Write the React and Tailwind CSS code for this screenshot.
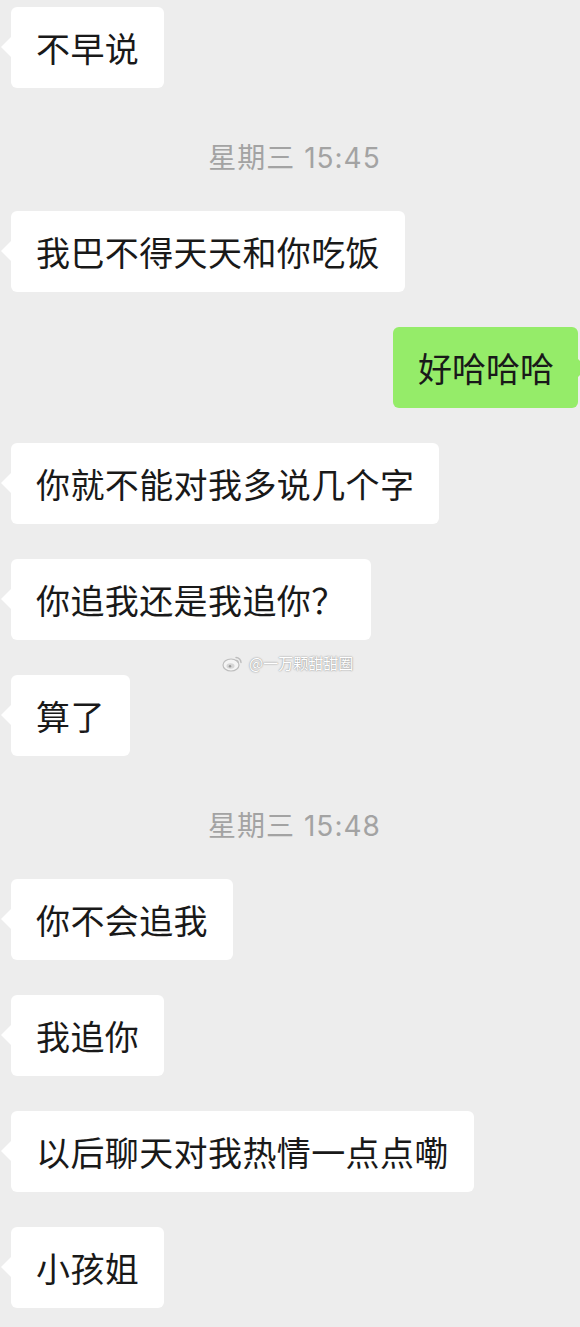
import React from 'react';

const font = { fontFamily: '"Noto Sans CJK SC", "Noto Sans", sans-serif' };

const messages = [
  { type: 'in', text: '不早说', first: true },
  { type: 'time', text: '星期三 15:45' },
  { type: 'in', text: '我巴不得天天和你吃饭', afterTime: true },
  { type: 'out', text: '好哈哈哈' },
  { type: 'in', text: '你就不能对我多说几个字' },
  { type: 'in', text: '你追我还是我追你？' },
  { type: 'in', text: '算了' },
  { type: 'time', text: '星期三 15:48' },
  { type: 'in', text: '你不会追我', afterTime: true },
  { type: 'in', text: '我追你' },
  { type: 'in', text: '以后聊天对我热情一点点嘞' },
  { type: 'in', text: '小孩姐' },
];

const Bubble = ({ msg }) => {
  const mt = msg.first ? 'mt-[7px]' : msg.afterTime ? 'mt-[33px]' : 'mt-[35px]';
  if (msg.type === 'out') {
    return (
      <div className={`${mt} self-end mr-[2px] relative`}>
        <div className="bg-[#95ec69] rounded-[6px] pl-[25px] pr-[24px] py-[20px] text-[34px] leading-[41px] text-[#191919]">
          {msg.text}
        </div>
        <div className="absolute right-[-9px] top-[31px] w-0 h-0 border-y-[10px] border-y-transparent border-l-[10px] border-l-[#95ec69]" />
      </div>
    );
  }
  return (
    <div className={`${mt} self-start ml-[11px] relative`}>
      <div className="bg-white rounded-[6px] px-[25px] py-[20px] text-[34px] leading-[41px] tracking-[0.4px] text-[#191919] whitespace-nowrap">
        {msg.text}
      </div>
      <div className="absolute left-[-10px] top-[30px] w-0 h-0 border-y-[10px] border-y-transparent border-r-[10px] border-r-white" />
    </div>
  );
};

const WeiboMark = () => (
  <svg width="22" height="18" viewBox="0 0 22 18" fill="none">
    <ellipse cx="9" cy="11" rx="8" ry="6" fill="#f4f4f4" stroke="#bdbdbd" strokeWidth="1.2" />
    <ellipse cx="8.5" cy="12" rx="4" ry="2.8" fill="#d6d6d6" />
    <circle cx="8" cy="12.3" r="1.2" fill="#9a9a9a" />
    <path d="M14 3.5a5 5 0 0 1 5 5" stroke="#bdbdbd" strokeWidth="1.4" strokeLinecap="round" />
    <path d="M14 6.3a2.3 2.3 0 0 1 2.3 2.3" stroke="#bdbdbd" strokeWidth="1.2" strokeLinecap="round" />
  </svg>
);

export default function App() {
  return (
    <div className="relative w-[580px] min-h-[1327px] bg-[#ededed] overflow-hidden flex flex-col" style={font}>
      {messages.map((m, i) =>
        m.type === 'time' ? (
          <div
            key={i}
            className="mt-[50px] h-[40px] leading-[40px] pl-[9px] text-center text-[28px] tracking-[1px] text-[#a3a3a3] font-['Inter','Noto_Sans_CJK_SC',sans-serif]"
          >
            {m.text}
          </div>
        ) : (
          <Bubble key={i} msg={m} />
        )
      )}
      {/* watermark */}
      <div className="absolute left-[222px] top-[654px] flex items-center gap-[5px]">
        <WeiboMark />
        <span className="text-[15px] leading-[18px] text-white [text-shadow:0_0_2px_#9a9a9a,0_0_1px_#9a9a9a]">
          @一万颗甜甜圈
        </span>
      </div>
    </div>
  );
}
